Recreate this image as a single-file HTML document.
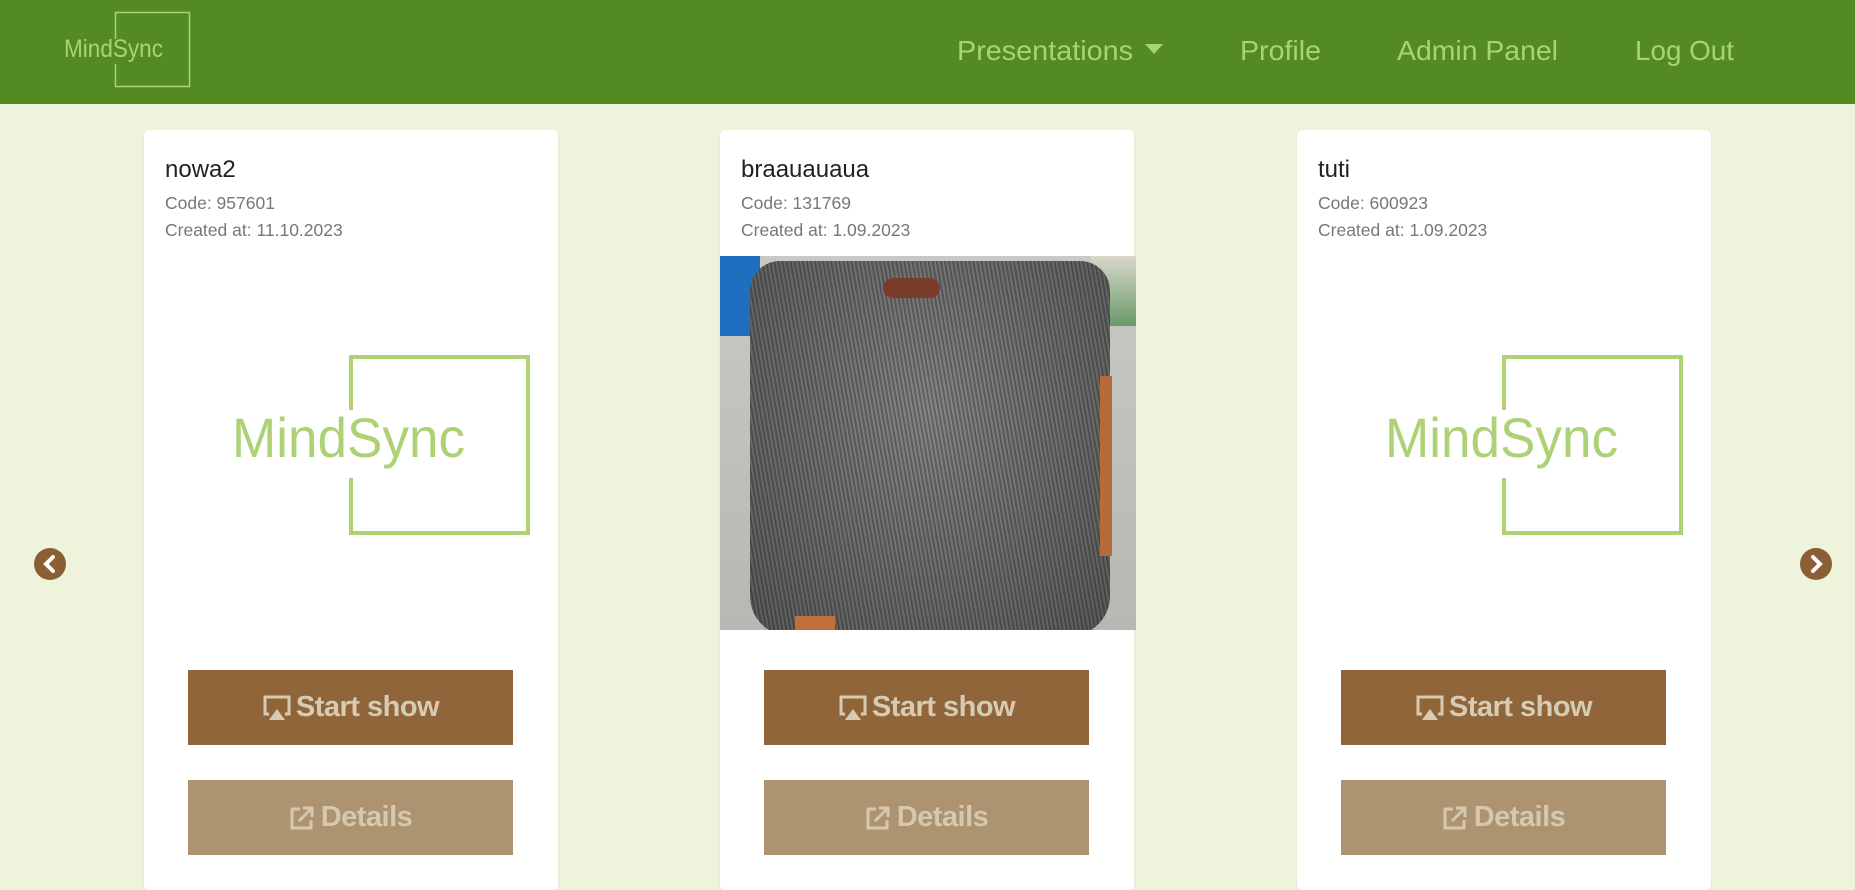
<!DOCTYPE html>
<html><head><meta charset="utf-8"><style>
*{margin:0;padding:0;box-sizing:border-box}
body{width:1855px;height:873px;overflow:hidden;background:#eef4dc;font-family:"Liberation Sans",sans-serif;position:relative}
.hdr{position:absolute;left:0;top:0;width:1855px;height:104px;background:#538b22}
.nav{position:absolute;top:30px;font-size:28px;color:#a8d46f;white-space:nowrap}
.card{position:absolute;top:130px;width:414px;height:760px;background:#fff;border-radius:5px;box-shadow:0 1px 3px rgba(0,0,0,.08)}
.t{position:absolute;left:21px;top:26px;font-size:24px;color:#222}
.s{position:absolute;left:21px;font-size:17.5px;color:#777}
.btn{position:absolute;left:44px;width:325px;height:75px;display:flex;align-items:center;justify-content:center;font-weight:bold;font-size:29px;letter-spacing:-0.5px;color:#d6ccb3}
.b1{top:540px;background:#91653a}
.b2{top:650px;background:#ae9370;color:#d4c8b0}
.arr{position:absolute;top:548px;width:32px;height:32px;border-radius:50%;background:#8b5e34}
</style></head><body>
<div class="hdr">
<svg width="220" height="104" style="position:absolute;left:0;top:0">
<path d="M115.5 39 V12.5 H189.5 V86.5 H115.5 V64" fill="none" stroke="#a9d46f" stroke-width="1.5"/>
<text x="64" y="57" font-family="Liberation Sans" font-size="25" fill="#a9d46f" textLength="99" lengthAdjust="spacingAndGlyphs">MindSync</text>
</svg>
<div class="nav" style="left:957px;width:176px"><svg width="176" height="40"><text x="0" y="30" font-family="Liberation Sans" font-size="28" fill="#a8d46f" textLength="176" lengthAdjust="spacingAndGlyphs">Presentations</text></svg></div>
<svg style="position:absolute;left:1145px;top:44px" width="18" height="10"><path d="M0 0H18L9 10Z" fill="#a8d46f"/></svg>
<div class="nav" style="left:1240px"><svg width="82" height="40"><text x="0" y="30" font-family="Liberation Sans" font-size="28" fill="#a8d46f" textLength="81" lengthAdjust="spacingAndGlyphs">Profile</text></svg></div>
<div class="nav" style="left:1397px"><svg width="162" height="40"><text x="0" y="30" font-family="Liberation Sans" font-size="28" fill="#a8d46f" textLength="161" lengthAdjust="spacingAndGlyphs">Admin Panel</text></svg></div>
<div class="nav" style="left:1635px"><svg width="100" height="40"><text x="0" y="30" font-family="Liberation Sans" font-size="28" fill="#a8d46f" textLength="99" lengthAdjust="spacingAndGlyphs">Log Out</text></svg></div>
</div>

<div class="arr" style="left:34px"><svg width="32" height="32"><path d="M19 9L12 16L19 23" fill="none" stroke="#fff" stroke-width="4" stroke-linecap="round"/></svg></div>
<div class="arr" style="left:1800px"><svg width="32" height="32"><path d="M13 9L20 16L13 23" fill="none" stroke="#fff" stroke-width="4" stroke-linecap="round"/></svg></div>

<div class="card" style="left:144px">
<div class="t">nowa2</div><div class="s" style="top:63px">Code: 957601</div><div class="s" style="top:90px">Created at: 11.10.2023</div>
<svg width="414" height="260" style="position:absolute;left:0;top:210px">
<path d="M207 70 V17 H384 V193 H207 V138" fill="none" stroke="#acd275" stroke-width="4"/>
<text x="88" y="117" font-family="Liberation Sans" font-size="56" fill="#acd275" textLength="233" lengthAdjust="spacingAndGlyphs">MindSync</text>
</svg>
<div class="btn b1"><svg width="30" height="28" style="margin-right:4px"><path d="M7 20H3V3H27V20H23" fill="none" stroke="#d6ccb3" stroke-width="3"/><path d="M15 15L23 26H7Z" fill="#d6ccb3"/></svg>Start show</div>
<div class="btn b2"><svg width="26" height="26" style="margin-right:6px"><path d="M11 4H3V23H22V15" fill="none" stroke="#d4c8b0" stroke-width="3"/><path d="M10 16L22 4M14 3H23V12" fill="none" stroke="#d4c8b0" stroke-width="3"/></svg>Details</div>
</div>

<div class="card" style="left:720px">
<div class="t">braauauaua</div><div class="s" style="top:63px">Code: 131769</div><div class="s" style="top:90px">Created at: 1.09.2023</div>
<div style="position:absolute;left:0;top:126px;width:416px;height:374px;overflow:hidden;background:linear-gradient(#c9c9c4,#b8b8b3)">
<div style="position:absolute;left:0;top:0;width:40px;height:80px;background:#1f6fc0"></div>
<div style="position:absolute;left:370px;top:0;width:46px;height:70px;background:linear-gradient(#d9d7cc,#6a9a6a)"></div>
<div style="position:absolute;left:30px;top:5px;width:360px;height:375px;border-radius:30px 30px 40px 40px;background:repeating-linear-gradient(80deg,#5a5a5a 0 2px,#8c8c8c 2px 4px);"></div>
<div style="position:absolute;left:30px;top:5px;width:360px;height:375px;border-radius:30px 30px 40px 40px;background:radial-gradient(ellipse at 50% 40%,rgba(120,120,120,.3),rgba(40,40,40,.5))"></div>
<div style="position:absolute;left:163px;top:22px;width:57px;height:20px;border-radius:10px;background:#7a3b2a"></div>
<div style="position:absolute;left:380px;top:120px;width:12px;height:180px;background:#b86b3a"></div>
<div style="position:absolute;left:75px;top:360px;width:40px;height:14px;background:#c0703a"></div>
</div>
<div class="btn b1"><svg width="30" height="28" style="margin-right:4px"><path d="M7 20H3V3H27V20H23" fill="none" stroke="#d6ccb3" stroke-width="3"/><path d="M15 15L23 26H7Z" fill="#d6ccb3"/></svg>Start show</div>
<div class="btn b2"><svg width="26" height="26" style="margin-right:6px"><path d="M11 4H3V23H22V15" fill="none" stroke="#d4c8b0" stroke-width="3"/><path d="M10 16L22 4M14 3H23V12" fill="none" stroke="#d4c8b0" stroke-width="3"/></svg>Details</div>
</div>

<div class="card" style="left:1297px">
<div class="t">tuti</div><div class="s" style="top:63px">Code: 600923</div><div class="s" style="top:90px">Created at: 1.09.2023</div>
<svg width="414" height="260" style="position:absolute;left:0;top:210px">
<path d="M207 70 V17 H384 V193 H207 V138" fill="none" stroke="#acd275" stroke-width="4"/>
<text x="88" y="117" font-family="Liberation Sans" font-size="56" fill="#acd275" textLength="233" lengthAdjust="spacingAndGlyphs">MindSync</text>
</svg>
<div class="btn b1"><svg width="30" height="28" style="margin-right:4px"><path d="M7 20H3V3H27V20H23" fill="none" stroke="#d6ccb3" stroke-width="3"/><path d="M15 15L23 26H7Z" fill="#d6ccb3"/></svg>Start show</div>
<div class="btn b2"><svg width="26" height="26" style="margin-right:6px"><path d="M11 4H3V23H22V15" fill="none" stroke="#d4c8b0" stroke-width="3"/><path d="M10 16L22 4M14 3H23V12" fill="none" stroke="#d4c8b0" stroke-width="3"/></svg>Details</div>
</div>
</body></html>
